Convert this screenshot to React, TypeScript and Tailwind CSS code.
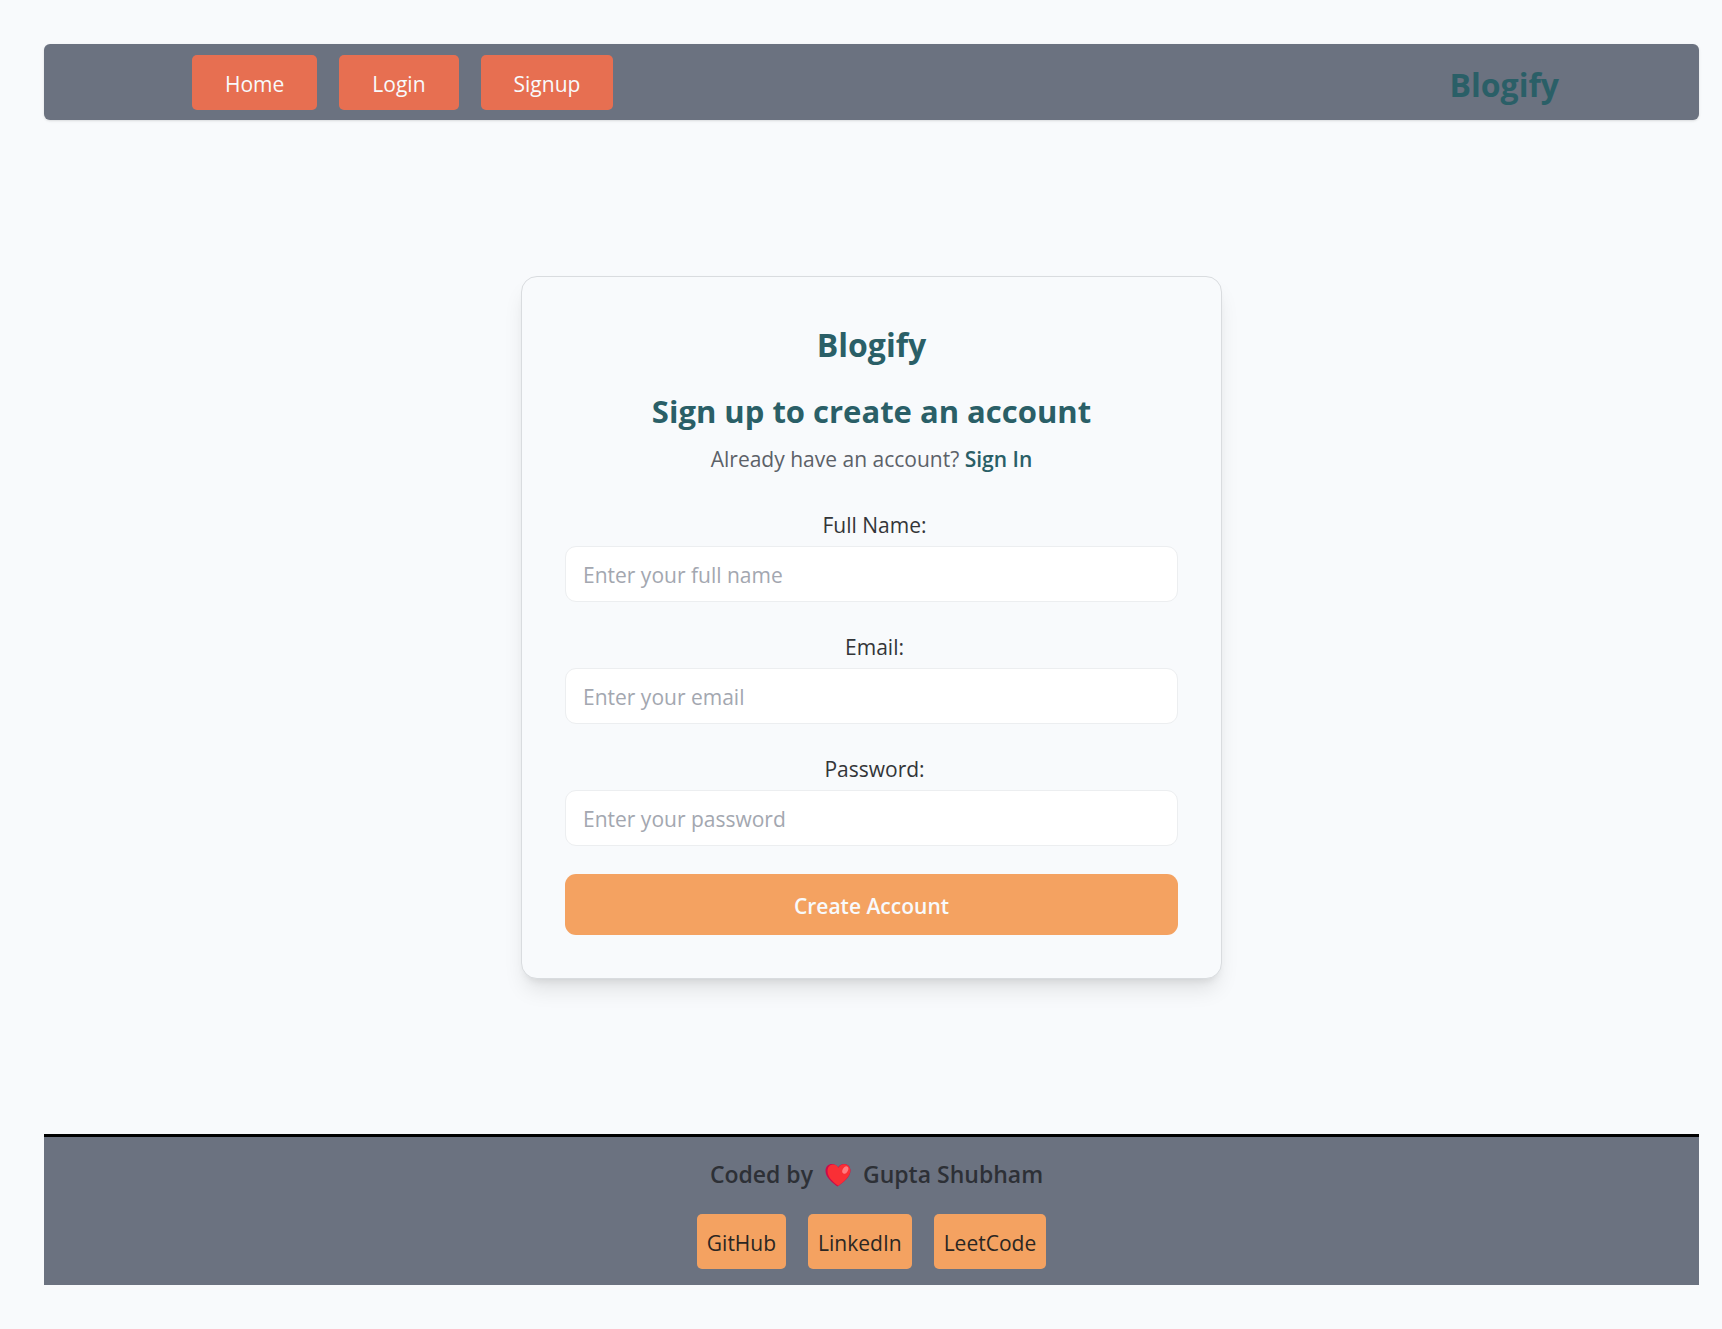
const navItems = ["Home", "Login", "Signup"];

const fields = [
  { id: "fullName", label: "Full Name:", type: "text", placeholder: "Enter your full name" },
  { id: "email", label: "Email:", type: "email", placeholder: "Enter your email" },
  { id: "password", label: "Password:", type: "password", placeholder: "Enter your password" },
];

const profiles = ["GitHub", "LinkedIn", "LeetCode"];

function Heart() {
  return (
    <svg viewBox="0 0 26 24" className="mx-[12px] h-[24px] w-[26px]" role="img" aria-label="love">
      <path
        d="M12.5 23.5C7 19.5.5 14.5.5 7.8.5 3.500 3.400 1 7 1c2.700 0 4.800 1.300 6 3.400C14.200 2.300 16.400 1 19 1c3.600 0 6.500 2.600 6.500 6.600 0 6.500-7.500 12.200-13 15.900Z"
        fill="#ca0b4a"
      />
      <path
        d="M13.300 22.800C8.500 19.300 2.500 14.300 2.500 8.200 2.500 4.300 4.800 1.500 8 1.500c2.500 0 4.300 1.200 5.400 3.300C14.600 2.700 16.500 1.200 19 1.200c3.600 0 6.300 2.600 6.300 6.400 0 6.200-7 11.700-12 15.200Z"
        fill="#f92f35"
      />
      <ellipse cx="20.300" cy="7" rx="2.600" ry="4" transform="rotate(28 20.300 7)" fill="#ff7c80" />
    </svg>
  );
}

export default function App() {
  return (
    <div className="flex min-h-screen flex-col bg-[#f8fafc] py-[44px] pr-[23px] pl-[44px] font-['Open_Sans','Noto_Sans',sans-serif] text-[21px] leading-[32px]">
      <header className="rounded-[6px] bg-[#6b7280] pt-[11px] pb-[10px] pr-[140px] pl-[148px] shadow">
        <nav className="flex items-center justify-between">
          <ul className="flex gap-[22px]">
            {navItems.map((item) => (
              <li key={item}>
                <button type="button" className="block rounded-[5px] bg-[#e76f51] px-[33px] pt-[13px] pb-[10px] text-[#f8fafc]">
                  {item}
                </button>
              </li>
            ))}
          </ul>
          <a href="#" className="pt-[4px] text-[32px] leading-[44px] font-bold text-[#2a5f67]">
            Blogify
          </a>
        </nav>
      </header>

      <main className="flex flex-1 items-center justify-center">
        <section className="w-full max-w-[701px] rounded-[16px] border border-[#d9dcdf] bg-[#f8fafc] p-[43px] text-center shadow-[0_14px_21px_-4px_rgba(0,0,0,0.1),0_6px_8px_-5px_rgba(0,0,0,0.1)]">
          <p className="text-[32px] leading-[50px] font-bold text-[#2a5f67]">Blogify</p>
          <h1 className="mt-[19px] text-[31px] leading-[44px] font-bold text-[#2a5f67]">
            Sign up to create an account
          </h1>
          <p className="mt-[10px] text-[#5c6168]">
            Already have an account?{" "}
            <a href="#" className="font-semibold text-[#2a5f67]">
              Sign In
            </a>
          </p>
          <form className="mt-[34px]">
            <div className="flex flex-col gap-[29px]">
              {fields.map((field) => (
                <div key={field.id}>
                  <label htmlFor={field.id} className="block pl-[6px] text-[#333538]">
                    {field.label}
                  </label>
                  <input
                    id={field.id}
                    type={field.type}
                    placeholder={field.placeholder}
                    className="mt-[5px] block h-[56px] w-full rounded-[11px] border border-[#eceef0] bg-white px-[17px] pt-[2px] placeholder:text-[#a3a7b0]"
                  />
                </div>
              ))}
            </div>
            <button
              type="button"
              className="mt-[28px] block w-full rounded-[11px] bg-[#f4a261] pt-[16px] pb-[13px] font-semibold text-[#f8fafc]"
            >
              Create Account
            </button>
          </form>
        </section>
      </main>

      <footer className="flex flex-col items-center border-t-[3px] border-black bg-[#6b7280] pt-[21px] pb-[16px]">
        <p className="flex items-center pl-[10px] text-[23px] leading-[33px] font-semibold text-[#2d3036]">
          Coded by
          <Heart />
          Gupta Shubham
        </p>
        <ul className="mt-[23px] flex gap-[22px]">
          {profiles.map((name) => (
            <li key={name}>
              <a href="#" className="block rounded-[5px] bg-[#f4a261] px-[10px] pt-[13px] pb-[10px] text-[#2b2622]">
                {name}
              </a>
            </li>
          ))}
        </ul>
      </footer>
    </div>
  );
}
